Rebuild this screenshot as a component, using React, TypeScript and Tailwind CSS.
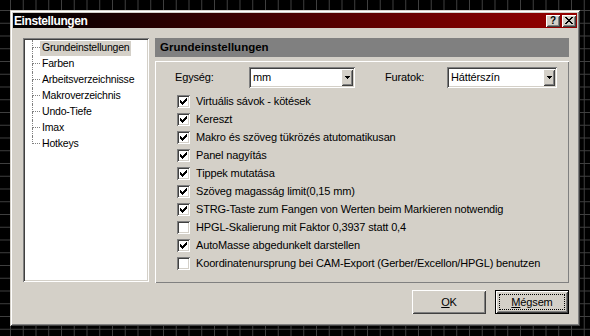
import { FC, ReactNode } from "react";

const sunken =
  "shadow-[inset_1px_1px_0_#808080,inset_-1px_-1px_0_#ffffff,inset_2px_2px_0_#404040,inset_-2px_-2px_0_#d4d0c8]";
const raised =
  "shadow-[inset_1px_1px_0_#ffffff,inset_-1px_-1px_0_#404040,inset_2px_2px_0_#d4d0c8,inset_-2px_-2px_0_#808080]";

const treeItems = [
  "Grundeinstellungen",
  "Farben",
  "Arbeitsverzeichnisse",
  "Makroverzeichnis",
  "Undo-Tiefe",
  "Imax",
  "Hotkeys",
];

const options = [
  { label: "Virtuális sávok - kötések", checked: true },
  { label: "Kereszt", checked: true },
  { label: "Makro és szöveg tükrözés atutomatikusan", checked: true },
  { label: "Panel nagyítás", checked: true },
  { label: "Tippek mutatása", checked: true },
  { label: "Szöveg magasság limit(0,15 mm)", checked: true },
  { label: "STRG-Taste zum Fangen von Werten beim Markieren notwendig", checked: true },
  { label: "HPGL-Skalierung mit Faktor 0,3937 statt 0,4", checked: false },
  { label: "AutoMasse abgedunkelt darstellen", checked: true },
  { label: "Koordinatenursprung bei CAM-Export (Gerber/Excellon/HPGL) benutzen", checked: false },
];

// classic 7x7 check mark, one 3px run per column
const checkTops = [2, 3, 4, 3, 2, 1, 0];

const CheckBox: FC<{ checked: boolean }> = ({ checked }) => (
  <div className={`w-[13px] h-[13px] bg-white shrink-0 ${sunken}`}>
    {checked && (
      <svg width="13" height="13" viewBox="0 0 13 13" shapeRendering="crispEdges">
        {checkTops.map((t, i) => (
          <rect key={i} x={3 + i} y={3 + t} width="1" height="3" fill="#000" />
        ))}
      </svg>
    )}
  </div>
);

const Combo: FC<{ value: string; width: string }> = ({ value, width }) => (
  <div className={`${width} h-[21px] bg-white flex items-stretch p-[2px] ${sunken}`}>
    <span className="flex-1 flex items-center pl-[2px]">{value}</span>
    <div className={`w-[12px] bg-[#d4d0c8] flex items-center justify-center ${raised}`}>
      <svg width="5" height="3" viewBox="0 0 5 3" shapeRendering="crispEdges">
        <path d="M0 0h5v1h-1v1h-1v1h-1v-1h-1v-1h-1z" fill="#000" />
      </svg>
    </div>
  </div>
);

const Button: FC<{ children: ReactNode; isDefault?: boolean }> = ({ children, isDefault }) =>
  isDefault ? (
    <div className="w-[74px] h-[24px] border border-black">
      <div className={`w-full h-full bg-[#d4d0c8] p-[3px] ${raised}`}>
        <div className="w-full h-full border border-dotted border-black flex items-center justify-center">
          {children}
        </div>
      </div>
    </div>
  ) : (
    <div className={`w-[74px] h-[24px] bg-[#d4d0c8] flex items-center justify-center ${raised}`}>
      {children}
    </div>
  );

const CaptionButton: FC<{ children: ReactNode }> = ({ children }) => (
  <div
    className={`w-[14px] h-[12px] bg-[#d4d0c8] flex items-center justify-center text-[10px] font-bold leading-none text-black ${raised}`}
  >
    {children}
  </div>
);

export default function App() {
  return (
    <div className="w-[590px] h-[336px] overflow-hidden bg-black bg-[image:linear-gradient(to_right,#404040_1px,transparent_1px),linear-gradient(to_bottom,#404040_1px,transparent_1px)] bg-[size:12.75px_12.75px] bg-[position:10px_10px] pl-[10px] pt-[10px] font-['Liberation_Sans',Arial,sans-serif] text-[11px] tracking-[-0.15px] text-black">
      <div className="w-[570px] h-[316px] bg-[#d4d0c8] p-[3px] flex flex-col shadow-[inset_1px_1px_0_#d4d0c8,inset_-1px_-1px_0_#404040,inset_2px_2px_0_#ffffff,inset_-2px_-2px_0_#808080]">
        {/* title bar */}
        <div className="h-[15px] bg-[linear-gradient(to_right,#000000,#960000)] flex items-center justify-between pl-[1px] pr-[1px]">
          <span className="text-white font-bold text-[12px] tracking-[-0.4px]">Einstellungen</span>
          <div className="flex gap-[2px]">
            <CaptionButton>?</CaptionButton>
            <CaptionButton>
              <svg width="8" height="7" viewBox="0 0 8 7" shapeRendering="crispEdges">
                <path
                  d="M0 0h2v1h1v1h2v-1h1v-1h2v1h-1v1h-1v1h-1v1h1v1h1v1h1v1h-2v-1h-1v-1h-2v1h-1v1h-2v-1h1v-1h1v-1h1v-1h-1v-1h-1v-1h-1z"
                  fill="#000"
                />
              </svg>
            </CaptionButton>
          </div>
        </div>

        <div className="flex-1 flex flex-col pl-[10px] pr-[8px] pt-[10px]">
          <div className="flex gap-[6px] h-[245px]">
            {/* tree */}
            <div className={`w-[126px] h-[244px] bg-white p-[2px] ${sunken}`}>
              <div className="pl-[7px] text-[10.5px] tracking-[-0.2px]">
                {treeItems.map((item, i) => {
                  const last = i === treeItems.length - 1;
                  return (
                    <div key={item} className="flex h-[16px]">
                      <div className="w-[8px] shrink-0 flex flex-col">
                        <div className="h-[8px] border-l border-b border-dotted border-[#808080]" />
                        <div className={`flex-1 ${last ? "" : "border-l border-dotted border-[#808080]"}`} />
                      </div>
                      <div className="flex items-center">
                        <span
                          className={`px-[2px] h-[15px] flex items-center whitespace-nowrap ${i === 0 ? "bg-[#d4d0c8]" : ""}`}
                        >
                          {item}
                        </span>
                      </div>
                    </div>
                  );
                })}
              </div>
            </div>

            {/* right panel */}
            <div className="flex-1 flex flex-col">
              <div className="h-[19px] bg-[#808080] pl-[5px] flex items-center font-bold text-[11.5px] tracking-[0px]">
                Grundeinstellungen
              </div>
              <div className="mt-[4px] h-[222px] shadow-[inset_1px_1px_0_#ffffff,inset_-1px_-1px_0_#808080] pt-[6px]">
                <div className="flex items-center pl-[20px]">
                  <span className="w-[74px]">Egység:</span>
                  <Combo value="mm" width="w-[106px]" />
                  <span className="w-[62px] ml-[30px]">Furatok:</span>
                  <Combo value="Háttérszín" width="w-[110px]" />
                </div>
                <div className="mt-[4px] pl-[22px] flex flex-col">
                  {options.map((o) => (
                    <div key={o.label} className="h-[18px] flex items-center gap-[6px] whitespace-nowrap">
                      <CheckBox checked={o.checked} />
                      <span>{o.label}</span>
                    </div>
                  ))}
                </div>
              </div>
            </div>
          </div>

          {/* buttons */}
          <div className="mt-[7px] flex justify-end gap-[9px]">
            <Button>
              <span>
                <span className="underline">O</span>K
              </span>
            </Button>
            <Button isDefault>
              <span>
                <span className="underline">M</span>égsem
              </span>
            </Button>
          </div>
        </div>
      </div>
    </div>
  );
}
